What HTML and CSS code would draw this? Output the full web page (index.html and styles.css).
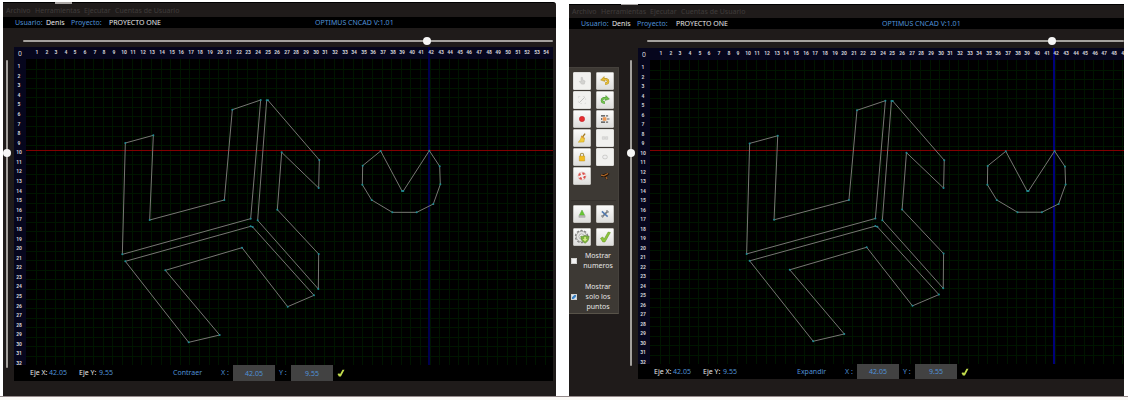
FILE: index.html
```html
<!DOCTYPE html>
<html lang="es">
<head>
<meta charset="utf-8">
<title>OPTIMUS CNCAD</title>
<link rel="stylesheet" href="styles.css">
</head>
<body>
<svg class="sprites" aria-hidden="true">
  <symbol id="i-check" viewBox="0 0 18 18"><path d="M4 10.500l2.500-1.500 1.500 2.500 4.500-8 2.500.5-6 10.500h-2.500z" fill="#8cc63a" stroke="#6a9a28" stroke-width=".7"/></symbol>
  <symbol id="i-tick" viewBox="0 0 8 8"><path d="M.5 5l1.700-.7.8 1 2.500-4.500h2l-3.600 6.600h-2z" fill="#c2dc4c"/></symbol>
</svg>
<main class="stage">
  <section class="window window-compact">
    <nav class="menu">
      <a href="#">Archivo</a><a href="#">Herramientas</a><a href="#">Ejecutar</a><a href="#">Cuentas de Usuario</a>
    </nav>
    <header class="info">
      <span class="blue">Usuario:</span><span>Denis</span><span class="blue">Proyecto:</span><span>PROYECTO ONE</span><span class="blue">OPTIMUS CNCAD V:1.01</span>
    </header>
    <div class="work">
      <input class="slider slider-y" type="range" min="0" max="1000" value="297" aria-label="Posición Y">
      <div class="editor">
        <input class="slider slider-x" type="range" min="0" max="1000" value="767" aria-label="Posición X">
        <svg class="plot" data-step-x="9.610" data-step-y="9.580" role="img" aria-label="Plano de corte"></svg>
        <form class="status">
          <span>Eje X:</span><span class="blue">42.05</span><span>Eje Y:</span><span class="blue">9.55</span>
          <button class="link blue" type="button">Contraer</button>
          <label class="blue" for="x1">X :</label><input class="coord" id="x1" value="42.05">
          <label class="blue" for="y1">Y :</label><input class="coord" id="y1" value="9.55">
          <button class="accept" type="button" aria-label="Aceptar"><svg><use href="#i-tick"/></svg></button>
        </form>
      </div>
    </div>
  </section>

  <section class="window window-full">
    <nav class="menu">
      <a href="#">Archivo</a><a href="#">Herramientas</a><a href="#">Ejecutar</a><a href="#">Cuentas de Usuario</a>
    </nav>
    <header class="info">
      <span class="blue">Usuario:</span><span>Denis</span><span class="blue">Proyecto:</span><span>PROYECTO ONE</span><span class="blue">OPTIMUS CNCAD V:1.01</span>
    </header>
    <div class="work">
      <aside class="tools">
        <div class="tool-grid">
          <button class="tool" disabled aria-label="Seleccionar"><svg viewBox="0 0 18 18"><path d="M8 5l1.500 0 .5 3 2.500 1-1 3.500h-3L6 9.500l2 0z" fill="#d2d2d0" stroke="#bdbdbb" stroke-width=".6"/></svg></button>
          <button class="tool" aria-label="Deshacer"><svg viewBox="0 0 18 18"><path d="M7 7.500c3-1.200 5.500-.3 5.500 1.800 0 1.500-1.200 2.700-3.500 2.700" fill="none" stroke="#a98313" stroke-width="2.600"/><path d="M4 8l4-4 .8 5.500z" fill="#e0b62c" stroke="#a98313" stroke-width=".5"/><path d="M7 7.500c3-1.200 5.500-.3 5.500 1.800 0 1.500-1.200 2.700-3.300 2.700" fill="none" stroke="#e6bf3c" stroke-width="1.700"/></svg></button>
          <button class="tool" disabled aria-label="Línea"><svg viewBox="0 0 18 18"><path d="M6 12l6-6" stroke="#bcbcba"/><path d="M5 5h8v8H5z" fill="none" stroke="#d4d4d2" stroke-width=".7" stroke-dasharray="2 3"/></svg></button>
          <button class="tool" aria-label="Rehacer"><svg viewBox="0 0 18 18"><path d="M11 7.500c-3-1.200-5.500-.3-5.500 1.800 0 1.500 1.200 2.700 3.500 2.700" fill="none" stroke="#3f8c2c" stroke-width="2.600"/><path d="M14 8l-4-4-.8 5.500z" fill="#6cbc45" stroke="#3f8c2c" stroke-width=".5"/><path d="M11 7.500c-3-1.200-5.500-.3-5.500 1.800 0 1.500 1.200 2.700 3.300 2.700" fill="none" stroke="#77c551" stroke-width="1.700"/></svg></button>
          <button class="tool" aria-label="Punto"><svg viewBox="0 0 18 18"><circle cx="9" cy="9" r="3" fill="#e52d30" stroke="#b82226" stroke-width=".5"/></svg></button>
          <button class="tool" aria-label="Alinear"><svg viewBox="0 0 18 18"><path d="M4.500 5.500H9M4.500 9H6M4.500 12.500H9" stroke="#444" stroke-width="1.500"/><path d="M10 5.500h2.500M11 9h3M10 12.500h2.500" stroke="#666" stroke-width="1.200"/><path d="M6.500 7h4v4h-4z" fill="#ed9652"/></svg></button>
          <button class="tool" aria-label="Limpiar"><svg viewBox="0 0 18 18"><path d="M12.500 4l-3 4" stroke="#a27821" stroke-width="1.500"/><path d="M8.500 6.500l3.500 2.500-.8 4.500-6.500.2c2-1.500 3.100-3.700 3.800-7.200z" fill="#f1cc3b" stroke="#b8951b" stroke-width=".5"/><path d="M8.300 7.300l3.200 2.300" stroke="#d5703a" stroke-width=".8"/></svg></button>
          <button class="tool" disabled aria-label="Agrupar"><svg viewBox="0 0 18 18"><path d="M6 7.500h2.500v3H6zM9.500 7.500H12v3H9.500z" fill="#ddd" stroke="#c8c8c6" stroke-width=".6"/></svg></button>
          <button class="tool" aria-label="Bloquear"><svg viewBox="0 0 18 18"><path d="M7.200 8.500V6.500a1.800 1.800 0 0 1 3.600 0v2" fill="none" stroke="#aa9550" stroke-width="1.200"/><path d="M6 8h6v5.500H6z" fill="#f2bd20" stroke="#bd8b12" stroke-width=".5"/></svg></button>
          <button class="tool" disabled aria-label="Desagrupar"><svg viewBox="0 0 18 18"><rect x="6.500" y="7" width="5" height="4" rx="1.500" fill="#eee" stroke="#c8c8c6"/></svg></button>
          <button class="tool" aria-label="Ayuda"><svg viewBox="0 0 18 18"><circle cx="9" cy="9" r="3.200" fill="none" stroke="#f6f0ee" stroke-width="2.300"/><circle cx="9" cy="9" r="3.200" fill="none" stroke="#dd4f4a" stroke-width="2.300" stroke-dasharray="2.900 2.120"/><circle cx="9" cy="9" r="4.500" fill="none" stroke="#cf8b86" stroke-width=".4"/></svg></button>
          <button class="tool tool-flat" aria-label="Cortar"><svg viewBox="0 0 18 18"><path d="M4 8l7.500-2.500 2.500 1-2 2.200-1.200.6 1.200 3.700-1.800-.5L8.500 10 5 9.800z" fill="#1c1106"/><path d="M4.500 8l4 .8M8.500 8.300l4-2M10 10l1.300 2.300" stroke="#b0682a" stroke-width="1.300"/></svg></button>
        </div>
        <div class="tool-grid tool-grid-large">
          <button class="tool" aria-label="Cargar"><svg viewBox="0 0 18 18"><path d="M9 4.500l3 6H6z" fill="#68c832" stroke="#45992b" stroke-width=".5"/><path d="M5.500 10.800h7v2h-7z" fill="#b9b9b5" stroke="#8e8e8a" stroke-width=".4"/></svg></button>
          <button class="tool" aria-label="Configurar"><svg viewBox="0 0 18 18"><path d="M5.500 12.500l7-7" stroke="#77797a" stroke-width="1.800"/><path d="M5.500 6l6.500 6" stroke="#4f79b2" stroke-width="1.700"/><path d="M10.500 5l2.500 2.300M5 10.500l2 2.200" stroke="#92969a" stroke-width="1.300"/></svg></button>
          <button class="tool" aria-label="Procesar"><svg viewBox="0 0 18 18"><circle cx="8.500" cy="8.500" r="6.800" fill="none" stroke="#858582" stroke-width="1.600" stroke-dasharray="2.600 1.670"/><circle cx="8.500" cy="8.500" r="5.900" fill="#e4e4e1" stroke="#858582" stroke-width=".7"/><circle cx="8.500" cy="8.500" r="2.900" fill="#fff" stroke="#90908c" stroke-width=".7"/><path d="M7.500 8q3.500.5 5-1 1.200 1.500 4.500 1c0 4-1.700 6.500-4.500 8-3-1.500-5-4-5-8z" fill="#7eb53d" stroke="#587d35" stroke-width=".6"/><path d="M11.500 9h1.900v2.200H15l-2.600 2.800-2.600-2.800h1.700z" fill="#d4ea86"/></svg></button>
          <button class="tool" aria-label="Confirmar"><svg viewBox="0 0 18 18"><use href="#i-check"/></svg></button>
        </div>
        <label class="option"><input type="checkbox"><span>Mostrar numeros</span></label>
        <label class="option option-points"><input type="checkbox" checked><span>Mostrar solo los puntos</span></label>
      </aside>
      <input class="slider slider-y" type="range" min="0" max="1000" value="299" aria-label="Posición Y">
      <div class="editor">
        <input class="slider slider-x" type="range" min="0" max="1000" value="855" aria-label="Posición X">
        <svg class="plot" data-step-x="9.640" data-step-y="9.510" role="img" aria-label="Plano de corte"></svg>
        <form class="status">
          <span>Eje X:</span><span class="blue">42.05</span><span>Eje Y:</span><span class="blue">9.55</span>
          <button class="link blue" type="button">Expandir</button>
          <label class="blue" for="x2">X :</label><input class="coord" id="x2" value="42.05">
          <label class="blue" for="y2">Y :</label><input class="coord" id="y2" value="9.55">
          <button class="accept" type="button" aria-label="Aceptar"><svg><use href="#i-tick"/></svg></button>
        </form>
      </div>
    </div>
  </section>
</main>
<div class="desk-edge"></div>
<script src="plot.js"></script>
</body>
</html>
```
FILE: styles.css
```css
* { box-sizing: border-box; }

body {
  margin: 0;
  min-height: 100vh;
  display: flex;
  flex-direction: column;
  background: #fff;
  color: #e6e6e6;
  font: 7px/10px "Noto Sans", "Open Sans", sans-serif;
}

button, input { margin: 0; font: inherit; color: inherit; }
.blue { color: #4f90d6; }
.sprites { display: none; }

.stage {
  flex: 1;
  display: grid;
  grid-template-columns: 553fr 555fr;
  gap: 13px;
  padding: 0 4px 0 3px;
}

.desk-edge {
  height: 4px;
  border-top: 1px solid #94898a;
  background: #faf8f5;
}

.window {
  min-width: 0;
  display: flex;
  flex-direction: column;
  margin-top: 2px;
  background: #1f1b1a;
  border-top: 1px solid #000;
}
.window-compact { border-radius: 0 3px 0 0; }
.window-full { margin-top: 4px; }

.menu {
  position: relative;
  display: grid;
  grid-template-columns: 29px 49px 31px auto;
  justify-content: start;
  height: 14px;
  padding: 3px 0 0 3px;
}
.window-full .menu { height: 13px; padding-top: 2px; }
.menu::before {
  content: "";
  position: absolute;
  left: 52px;
  top: -1px;
  width: 17px;
  height: 2px;
  background: #aaa6a4;
}
.window-full .menu::before { height: 1px; }
.menu a { color: #3f3c3b; text-decoration: none; white-space: nowrap; }

.info {
  display: grid;
  grid-template-columns: 31px 25px 38px 206px auto;
  justify-content: start;
  padding: 1px 0 0 12px;
  background: #000;
  white-space: nowrap;
}
.window-full .info { grid-template-columns: 31px 25px 39px 206px auto; }

.work { flex: 1; display: flex; min-height: 0; padding: 0 3px 15px 0; }
.window-full .work { padding: 0 0 17px; }

.editor { flex: 1; min-width: 0; display: flex; flex-direction: column; }

.slider { appearance: none; background: none; }
.slider-x { height: 8px; margin: 9px 0 2px 9px; }
.window-full .slider-x { margin-top: 8px; margin-bottom: 3px; }
.slider-y { writing-mode: vertical-lr; width: 8px; margin: 32px 3px 13px 0; }
.window-full .slider-y { margin: 31px 3px 13px 8px; }
.slider::-webkit-slider-runnable-track { background: #a4a19d; border-radius: 1px; }
.slider-x::-webkit-slider-runnable-track { height: 2px; }
.slider-y::-webkit-slider-runnable-track { width: 2px; }
.slider::-webkit-slider-thumb {
  appearance: none;
  width: 8px;
  height: 8px;
  border-radius: 50%;
  background: #f6f6f6;
}
.slider-x::-webkit-slider-thumb { margin-top: -3px; }
.slider-y::-webkit-slider-thumb { margin-left: -3px; }

.plot { flex: 1; width: 100%; min-height: 0; display: block; background: #000; }
.ruler { fill: #06061d; }
.grid-line { stroke: #001500; stroke-width: 1; }
.tick { fill: #d0d0d6; font: bold 5px Roboto, "Liberation Sans", sans-serif; text-anchor: middle; }
.tick-zero { font-size: 7px; font-weight: normal; }
.shape { fill: none; stroke: #767672; stroke-width: 1; }
.node { fill: #1d8a92; }
.axis-x { stroke: #00007c; stroke-width: 2; }
.window-compact .axis-x { stroke: #00004e; }
.axis-y { stroke: #820000; stroke-width: 1; }

.status {
  display: grid;
  grid-template-columns: 19px 30px 20px 72px 50px 12px 42px 16px 42px 16px;
  align-items: center;
  height: 16px;
  padding-left: 16px;
  background: #000;
  white-space: nowrap;
}
.window-full .status { height: 15px; }
.status button { padding: 0; border: 0; background: none; }
.status .link { width: 30px; margin-right: 16px; text-align: left; justify-self: center; }
.status .coord {
  width: 100%;
  height: 100%;
  padding: 0;
  border: 0;
  background: #424242;
  color: #4f90d6;
  text-align: center;
}
.status label:nth-of-type(2) { padding-left: 4px; }
.accept { justify-self: end; height: 8px; }
.accept svg { display: block; width: 8px; height: 8px; margin-right: 4px; }

.tools {
  align-self: start;
  width: 50px;
  margin-top: 38px;
  padding: 4px 2px 1px;
  background: #3d3934;
  border: 1px solid #45413c;
  border-left: 0;
  border-bottom-color: #585349;
}
.tool-grid {
  display: grid;
  grid-template-columns: 18px 18px;
  column-gap: 5px;
  row-gap: 1px;
  padding: 0 2px;
}
.tool-grid-large {
  margin: 15px 0 5px;
  padding-top: 4px;
  border-top: 1px solid #34302c;
  row-gap: 5px;
}
.tool {
  height: 18px;
  padding: 0;
  border: 1px solid #c4c3bf;
  border-radius: 1px;
  background: linear-gradient(#fbfbfa, #dededc);
}
.tool:disabled { background: #f1f1ef; border-color: #dededb; }
.tool svg { display: block; width: 16px; height: 16px; overflow: visible; }
.tool-flat { background: none; border-color: transparent; }

.option {
  display: grid;
  grid-template-columns: 6px 1fr;
  column-gap: 3px;
  align-items: center;
  text-align: center;
}
.option + .option { margin-top: 11px; }
.option input {
  appearance: none;
  width: 6px;
  height: 6px;
  background: #f2f2f2;
  border: 1px solid #d2d2d0;
}
.option input:checked { background: linear-gradient(135deg, #dbe9f5 20%, #2a72b8 40%, #4e91cc 65%, #dbe9f5 80%); }
```
FILE: plot.js
```js
const NS = "http://www.w3.org/2000/svg";
const RULER = 12;
const CURSOR = { x: 42.05, y: 9.55 };
const BASE = { x: 9.61, y: 9.58 };

// Contours in thirds of a pixel, measured from the corner of the drawing area.
const SHAPES = [
  [[298,252],[382,229],[371,483],[595,423],[619,152],[704,123],[674,479],[289,586]],
  [[722,124],[726,124],[880,303],[878,387],[767,280],[754,452],[878,585],[877,690],[695,484]],
  [[298,607],[674,502],[680,504],[864,709],[785,743],[648,566],[418,634],[581,828],[488,850]],
  [[1064,276],[1010,320],[1009,377],[1037,423],[1099,460],[1172,460],[1222,435],[1243,376],[1241,322],[1210,275],[1132,396],[1128,396]]
];

function add(parent, name, attrs, text) {
  const el = document.createElementNS(NS, name);
  for (const key in attrs) el.setAttribute(key, attrs[key]);
  if (text !== undefined) el.textContent = text;
  parent.appendChild(el);
}

document.querySelectorAll(".plot").forEach(svg => {
  const stepX = Number(svg.dataset.stepX);
  const stepY = Number(svg.dataset.stepY);
  const box = svg.getBoundingClientRect();
  const columns = Math.floor((box.width - RULER) / stepX);
  const rows = Math.floor((box.height - RULER) / stepY + 0.2);
  const line = (cls, x1, y1, x2, y2) => add(svg, "line", { class: cls, x1, y1, x2, y2 });

  for (let i = 1; i <= columns; i++) {
    const x = Math.round(RULER + i * stepX) + 0.5;
    line("grid-line", x, RULER, x, "100%");
  }
  for (let i = 1; i <= rows; i++) {
    const y = Math.round(RULER + i * stepY) + 0.5;
    line("grid-line", RULER, y, "100%", y);
  }
  add(svg, "rect", { class: "ruler", width: "100%", height: RULER });
  add(svg, "rect", { class: "ruler", width: RULER, height: "100%" });

  const cx = Math.round(RULER + CURSOR.x * stepX) - 1;
  const cy = Math.floor(RULER + CURSOR.y * stepY) + 0.5;
  line("axis-x", cx, 0, cx, "100%");
  line("axis-y", RULER, cy, "100%", cy);

  SHAPES.forEach(points => {
    const px = points.map(([x, y]) => [
      RULER + x / 3 * stepX / BASE.x,
      RULER + y / 3 * stepY / BASE.y
    ]);
    add(svg, "polygon", { class: "shape", points: px.map(p => p.join(",")).join(" ") });
    px.forEach(([x, y]) => add(svg, "circle", { class: "node", cx: x, cy: y, r: 1 }));
  });

  add(svg, "text", { class: "tick tick-zero", x: 6, y: 9 }, "0");
  for (let i = 1; i <= columns; i++) {
    add(svg, "text", { class: "tick", x: Math.round(13.4 + i * stepX), y: 7 }, i);
  }
  for (let i = 1; i <= rows; i++) {
    add(svg, "text", { class: "tick", x: 5, y: Math.round(11.5 + i * stepY) }, i);
  }
});
```
